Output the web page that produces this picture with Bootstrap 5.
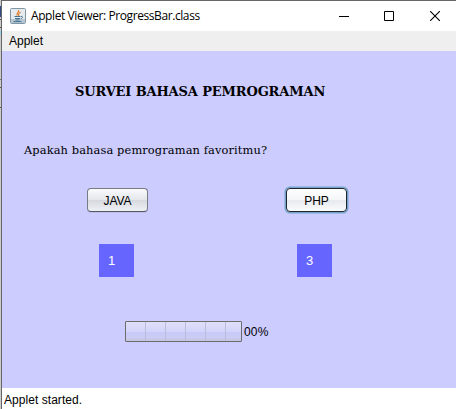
<!DOCTYPE html>
<html lang="id">
<head>
<meta charset="utf-8">
<title>Applet Viewer: ProgressBar.class</title>
<link href="https://cdn.jsdelivr.net/npm/bootstrap@5.3.0/dist/css/bootstrap.min.css" rel="stylesheet">
<style>
body{width:456px;height:409px;background:#ccc;font:12px/16px "Liberation Sans",Arial,sans-serif;color:#000}
.edge{width:1px;background:linear-gradient(#555,#555) 0 19px/1px 1px no-repeat,linear-gradient(#555,#555) 0 27px/1px 1px no-repeat,linear-gradient(#777,#777) 0 79px/1px 1px no-repeat,linear-gradient(#555,#555) 0 87px/1px 1px no-repeat,linear-gradient(#555,#555) 0 107px/1px 1px no-repeat,linear-gradient(#304a85,#304a85) 0 6px/1px 11px no-repeat,linear-gradient(#9bd0ea,#9bd0ea) 0 31px/1px 4px no-repeat,#ccc}
.viewer{border-left:1px solid #666;border-top:1px solid #666}
.titlebar{height:30px;padding-left:8px}
.titlebar h1{font:12px/16px "Open Sans","Noto Sans",sans-serif;letter-spacing:-.41px;margin:0 0 0 5px}
.controls{padding-right:16px}
.controls svg+svg{margin-left:35px}
.controls svg:last-child{margin-left:36px}
.menubar{height:20px;background:#efefef;padding:2px 7px}
.applet{height:337px;background:#ccf}
.heading{font:bold 13px/18px "DejaVu Serif",serif;margin:32px 0 0 73px;letter-spacing:-.14px}
.question{font:11.4px/18px "DejaVu Serif",serif;margin:40px 0 0 22px;letter-spacing:.12px}
.choices{margin:29px 0 0 85px;gap:138px}
.choice{width:61px}
.choice .btn{width:61px;height:24px;padding:1px 0 0;border:1px solid #777b82;border-bottom-color:#555960;border-radius:4px;font:12px/22px "Liberation Sans",sans-serif;color:#000;background:linear-gradient(#fafafc,#e4e7eb 48%,#d6d9df 52%,#eff1f5);box-shadow:0 1px 0 #bcbcee}
.choice .btn.focused{border-color:#1e262e;background:linear-gradient(#fff,#f4f6f8 48%,#e7eaee 52%,#fafbfc);box-shadow:0 0 0 1.5px #75a2ca}
.tally{width:35px;height:33px;background:#66f;color:#fff;margin:32px 0 0 12px;padding:9px 0 0 9px;font-size:13px;line-height:16px}
.second .tally{margin-left:11px}
.meter{margin:44px 0 0 123px}
.track{width:117px;height:21px;border:1px solid #6d6d6d;border-radius:1px;background:repeating-linear-gradient(90deg,transparent 0 19px,#bcbcdc 19px 20px),linear-gradient(#dfdffa,#d4d4fa 50%,#c9c9fb 52%,#ccccf5 80%,#c4c4e0)}
.meter span{margin-left:2px;letter-spacing:.15px}
.status{padding:4px 0 0 2px;letter-spacing:.05px}
</style>
</head>
<body class="overflow-hidden d-flex">
<div class="edge flex-shrink-0"></div>
<main class="viewer bg-white flex-grow-1">
<header class="titlebar d-flex align-items-center">
<svg width="16" height="16" viewBox="0 0 16 16" fill="none"><rect x=".5" y=".5" width="15" height="15" rx="1" fill="#e4eaee" stroke="#8196a5"/><path d="M1 11h14v4H1z" fill="#b7c8d3"/><path d="M8.5 2C10 4 5.7 4.8 7.3 7.6M10.7 4.3C7.8 5.5 8.5 6 8.8 7.8" stroke="#e47b25" stroke-width="1.2"/><path d="M4.5 8.5h6M5 10.5h5M5.5 12h4M3.5 13.6h8M11 8.5c2-.5 2 1.8-.3 2.3" stroke="#477292"/></svg>
<h1>Applet Viewer: ProgressBar.class</h1>
<div class="controls d-flex align-items-center ms-auto">
<svg width="10" height="10" viewBox="0 0 10 10"><path d="M0 5h10v1H0z"/></svg>
<svg width="10" height="10" viewBox="0 0 10 10"><path d="M.5.5h9v9h-9z" fill="none" stroke="#000"/></svg>
<svg width="10" height="10" viewBox="0 0 10 10"><path d="m0 0 10 10M10 0 0 10" stroke="#000" stroke-width="1.1"/></svg>
</div>
</header>
<nav class="menubar">Applet</nav>
<section class="applet d-flex flex-column align-items-start">
<h2 class="heading text-nowrap">SURVEI BAHASA PEMROGRAMAN</h2>
<p class="question text-nowrap mb-0">Apakah bahasa pemrograman favoritmu?</p>
<div class="choices d-flex">
<div class="choice"><button class="btn d-block">JAVA</button><div class="tally">1</div></div>
<div class="choice second"><button class="btn focused d-block">PHP</button><div class="tally">3</div></div>
</div>
<div class="meter d-flex align-items-center"><div class="track" role="progressbar" aria-label="Suara"></div><span>00%</span></div>
</section>
<footer class="status">Applet started.</footer>
</main>
<script src="https://cdn.jsdelivr.net/npm/bootstrap@5.3.0/dist/js/bootstrap.bundle.min.js"></script>
</body>
</html>
